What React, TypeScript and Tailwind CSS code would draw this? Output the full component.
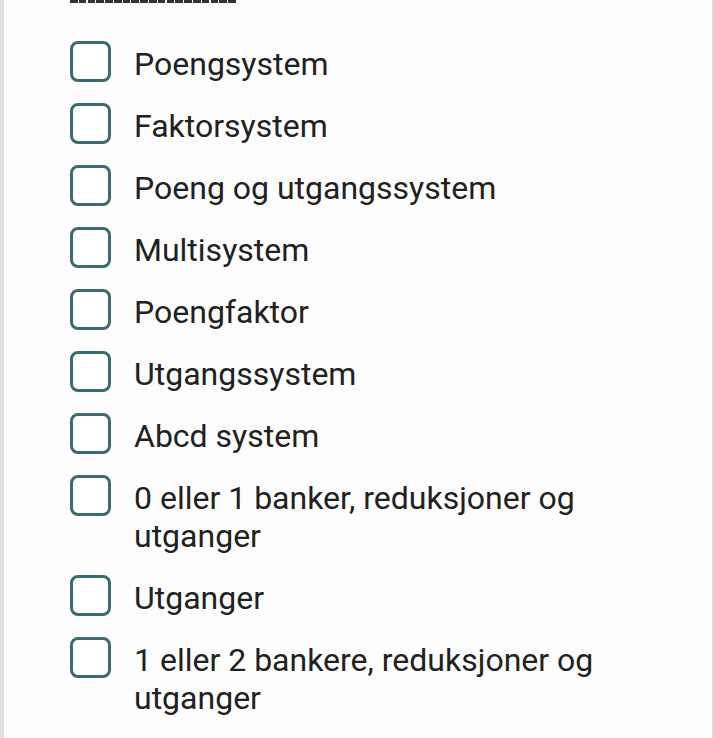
import React from 'react';

const options: string[] = [
  'Poengsystem',
  'Faktorsystem',
  'Poeng og utgangssystem',
  'Multisystem',
  'Poengfaktor',
  'Utgangssystem',
  'Abcd system',
  '0 eller 1 banker, reduksjoner og utganger',
  'Utganger',
  '1 eller 2 bankere, reduksjoner og utganger',
];

const CheckRow: React.FC<{ label: string }> = ({ label }) => (
  <label className="flex items-start gap-[23px] cursor-pointer">
    <span className="block shrink-0 w-[41px] h-[41px] rounded-[8px] border-[3.5px] border-[#3b6a6f] bg-white"></span>
    <span className="mt-[4px] text-[32px] leading-[38px] text-[#212121]">{label}</span>
  </label>
);

const App: React.FC = () => {
  return (
    <div
      className="w-[714px] h-[738px] overflow-hidden bg-[#fdfdfd] border-l-[4px] border-l-[#dde3e3] border-r-[2px] border-r-[#d8dcdc]"
      style={{ fontFamily: 'Roboto, "Liberation Sans", sans-serif' }}
    >
      <div className="pl-[66px] pr-[20px]">
        <div className="flex gap-[1.2px] h-[3px]">
          {Array.from({ length: 19 }).map((_, i) => (
            <span key={i} className="block w-[7.6px] h-[3px] bg-[#333333]"></span>
          ))}
        </div>
        <div className="mt-[38px] flex flex-col gap-[20px]">
          {options.map((o) => (
            <CheckRow key={o} label={o} />
          ))}
        </div>
      </div>
    </div>
  );
};

export default App;
